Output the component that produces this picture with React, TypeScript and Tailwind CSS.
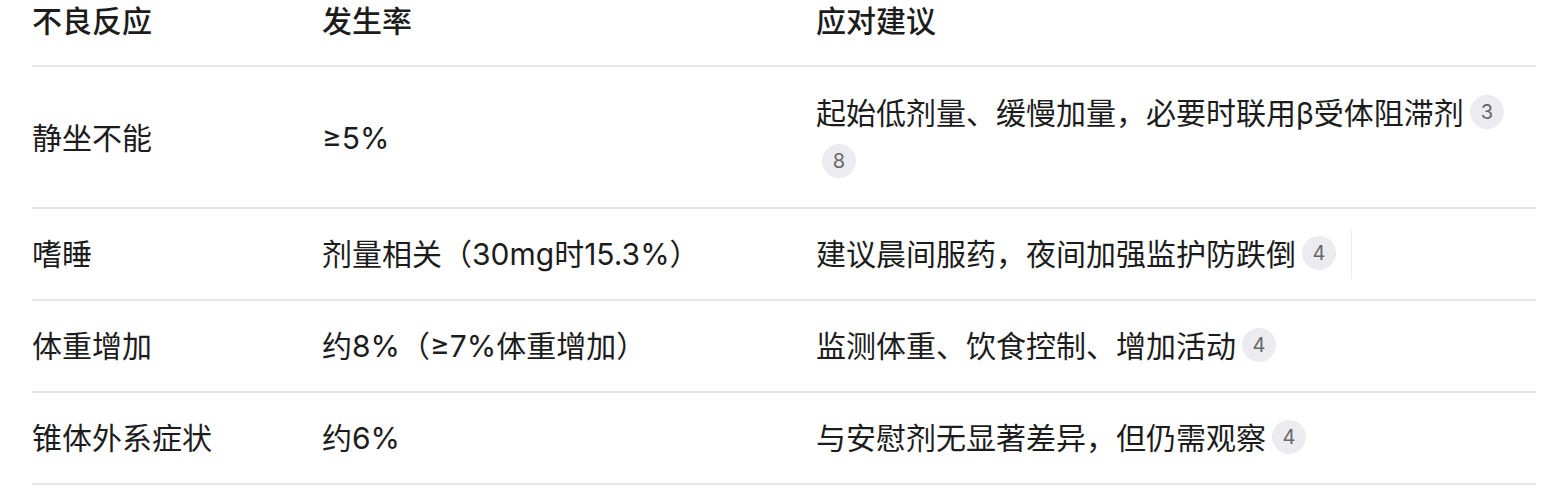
import React from "react";

type Row = {
  name: string;
  rate: string;
  advice: string;
  refs: number[];
  caret?: boolean;
};

const rows: Row[] = [
  {
    name: "静坐不能",
    rate: "≥5%",
    advice: "起始低剂量、缓慢加量，必要时联用β受体阻滞剂",
    refs: [3, 8],
  },
  {
    name: "嗜睡",
    rate: "剂量相关（30mg时15.3%）",
    advice: "建议晨间服药，夜间加强监护防跌倒",
    refs: [4],
    caret: true,
  },
  {
    name: "体重增加",
    rate: "约8%（≥7%体重增加）",
    advice: "监测体重、饮食控制、增加活动",
    refs: [4],
  },
  {
    name: "锥体外系症状",
    rate: "约6%",
    advice: "与安慰剂无显著差异，但仍需观察",
    refs: [4],
  },
];

function Ref({ n }: { n: number }) {
  return (
    <span className="ml-[6px] inline-block h-[34px] w-[34px] rounded-full bg-[#ececf0] text-center align-[5px] text-[20px] leading-[34px] text-[#666]">
      {n}
    </span>
  );
}

export default function App() {
  return (
    <div
      className="h-[498px] w-[1556px] bg-white text-[30px] text-[#1c1c1c]"
      style={{ fontFamily: '"Inter", "Noto Sans CJK SC", sans-serif' }}
    >
      <div className="ml-[32px] w-[1504px]">
        <div className="grid grid-cols-[290px_494px_720px] border-b-2 border-[#e5e5e5] pb-[22px] font-medium leading-[43px]">
          <div>不良反应</div>
          <div>发生率</div>
          <div>应对建议</div>
        </div>
        {rows.map((r, idx) => (
          <div
            key={r.name}
            className={`grid grid-cols-[290px_494px_720px] items-center border-b-2 border-[#e5e5e5] pb-[20px] leading-[49px] ${
              idx === 0 ? "pt-[22px]" : "pt-[21px]"
            }`}
          >
            <div>{r.name}</div>
            <div>{r.rate}</div>
            <div>
              {r.advice}
              {r.refs.map((n, i) => (
                <Ref key={i} n={n} />
              ))}
              {r.caret ? (
                <span className="ml-[15px] inline-block h-[49px] w-px bg-[#ececec] align-top" />
              ) : null}
            </div>
          </div>
        ))}
      </div>
    </div>
  );
}
